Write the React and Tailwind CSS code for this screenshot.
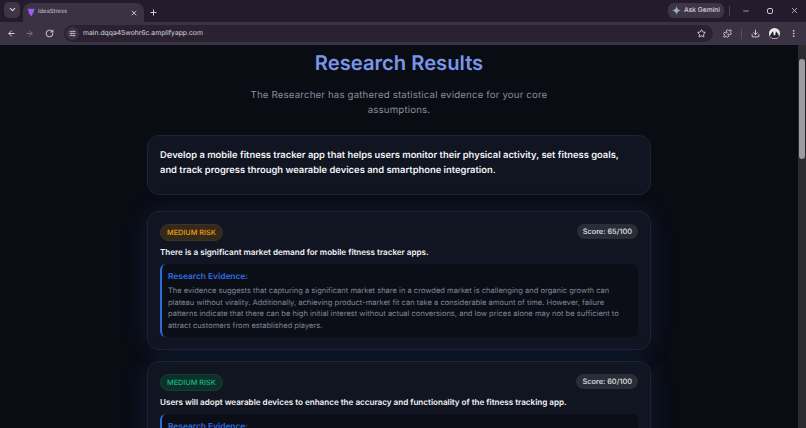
import { ArrowLeft, ArrowRight, ChevronDown, Download, Minus, MoreVertical, Plus, Puzzle, RotateCw, SlidersHorizontal, Star, X } from 'lucide-react';

const results = [
  {
    tone: 'amber',
    score: '65/100',
    claim: 'There is a significant market demand for mobile fitness tracker apps.',
    evidence:
      'The evidence suggests that capturing a significant market share in a crowded market is challenging and organic growth can plateau without virality. Additionally, achieving product-market fit can take a considerable amount of time. However, failure patterns indicate that there can be high initial interest without actual conversions, and low prices alone may not be sufficient to attract customers from established players.',
  },
  {
    tone: 'green',
    score: '60/100',
    claim: 'Users will adopt wearable devices to enhance the accuracy and functionality of the fitness tracking app.',
  },
];

function Gemini() {
  return (
    <svg viewBox="0 0 24 24" className="h-[9px] w-[9px] shrink-0">
      <path d="M12 0C13 7 17 11 24 12C17 13 13 17 12 24C11 17 7 13 0 12C7 11 11 7 12 0Z" fill="#6ea8e8" />
      <path d="M12 6C12.5 9 15 11.5 18 12C15 12.5 12.5 15 12 18C11.5 15 9 12.5 6 12C9 11.5 11.5 9 12 6Z" fill="#e8a06e" />
    </svg>
  );
}

function Avatar() {
  return (
    <svg viewBox="0 0 12 12" className="ml-[9px] h-[11px] w-[11px] shrink-0">
      <circle cx="6" cy="6" r="6" fill="#ecebe8" />
      <path d="M1 9C2 6 3 5 4.5 3.5L5.2 8H6.8L7.5 3.5C9 5 10 6 11 9C9 12 3 12 1 9Z" fill="#24222a" />
    </svg>
  );
}

function Chrome() {
  return (
    <div className="shrink-0 text-[#d9d5de]">
      <div className="flex h-[22px] items-end bg-[#241c2c] pl-[4px]">
        <div className="mb-[3px] flex h-[16px] w-[16px] items-center justify-center self-center rounded-[5px] bg-[#3e3647]">
          <ChevronDown size={9} strokeWidth={3} />
        </div>
        <div className="ml-[3px] flex h-[19px] w-[121px] items-center rounded-t-[8px] bg-[#3b3344] pr-[6px] pl-[4px]">
          <svg viewBox="0 0 12 12" className="h-[9px] w-[9px] shrink-0">
            <path d="M1 1H10L9 5L6 11L3 8Z" fill="#9b5cf0" />
          </svg>
          <span className="ml-[2px] flex-1 text-[5.8px] text-[#c9c4cf]">IdeaStress</span>
          <X size={8} strokeWidth={2.5} />
        </div>
        <Plus size={9} strokeWidth={2.5} className="mb-[5px] ml-[5px]" />
        <div className="mb-[1px] ml-auto flex items-center self-center">
          <div className="flex h-[15px] w-[56px] items-center justify-center gap-[3px] rounded-[6px] bg-[#3e3647] text-[6.7px] font-medium">
            <Gemini />
            Ask Gemini
          </div>
          <div className="mr-[4px] ml-[5px] h-[10px] w-px bg-[#4d4556]" />
          <div className="flex w-[24px] justify-center">
            <Minus size={8} />
          </div>
          <div className="flex w-[24px] justify-center">
            <div className="h-[6px] w-[6px] rounded-[2px] border border-[#c9c4cf]" />
          </div>
          <div className="flex w-[24px] justify-center">
            <X size={9} />
          </div>
        </div>
      </div>
      <div className="flex h-[23px] items-center bg-[#3b3344] pl-[7px]">
        <ArrowLeft size={9} strokeWidth={2.5} />
        <ArrowRight size={9} strokeWidth={2.5} className="ml-[9px] text-[#7d7585]" />
        <RotateCw size={9} strokeWidth={2.5} className="ml-[11px]" />
        <div className="ml-[10px] flex h-[17px] w-[649px] items-center rounded-full bg-[#2a2231] pr-[7px] pl-[2px]">
          <div className="flex h-[13px] w-[13px] items-center justify-center rounded-full bg-[#3b3344]">
            <SlidersHorizontal size={7} strokeWidth={2.5} />
          </div>
          <span className="ml-[4px] flex-1 text-[6.8px] text-[#d9d5de]">main.dqqa45wohr6c.amplifyapp.com</span>
          <Star size={9} strokeWidth={2.5} />
        </div>
        <Puzzle size={9} strokeWidth={2.5} className="ml-[10px]" />
        <div className="ml-[9px] h-[10px] w-px bg-[#5b5364]" />
        <Download size={9} strokeWidth={2.5} className="ml-[9px]" />
        <Avatar />
        <MoreVertical size={9} strokeWidth={2.5} className="ml-[9px]" />
      </div>
    </div>
  );
}

function ResultCard({ item }) {
  const isAmber = item.tone === 'amber';
  return (
    <section className="rounded-[12px] border border-[#1b2334] bg-[#111521] px-[12px] pt-[12px] pb-[12px] shadow-[0_0_24px_rgba(40,90,170,0.18)]">
      <div className="flex items-start justify-between">
        <span
          className={
            isAmber
              ? 'rounded-full border border-[#3f3220] bg-[#33291d] px-[6px] py-[1px] text-[7.3px] leading-[13px] font-medium text-[#f59e0b]'
              : 'rounded-full border border-[#114034] bg-[#0f3029] px-[6px] py-[1px] text-[7.3px] leading-[13px] font-medium text-[#10b981]'
          }
        >
          MEDIUM RISK
        </span>
        <span className="rounded-full bg-[#292d37] px-[6px] py-[2px] text-[7.4px] leading-[11px] font-medium text-[#e2e4e8]">
          Score: {item.score}
        </span>
      </div>
      <p className="mt-[5px] text-[8.1px] leading-[12px] font-semibold text-[#f1f3f6]">{item.claim}</p>
      <div className="mt-[6px] rounded-[6px] border-l-2 border-[#2b6cd8] bg-[#0b0e16] px-[6px] pt-[7px] pb-[6px]">
        <h3 className="text-[8.4px] leading-[12px] font-semibold text-[#2f6fe0]">Research Evidence:</h3>
        {item.evidence && (
          <p className="mt-[2px] text-[7.55px] leading-[11.5px] text-[#7f8796]">{item.evidence}</p>
        )}
      </div>
    </section>
  );
}

export default function App() {
  return (
    <div className="flex h-[428px] w-[806px] flex-col overflow-hidden bg-[#0a0c14] font-['Inter',sans-serif] [text-rendering:geometricPrecision]">
      <Chrome />
      <div className="flex min-h-0 flex-1">
        <main className="min-w-0 flex-1 overflow-hidden">
          <div className="mx-auto w-[504px] pt-[3px]">
            <h1 className="text-center text-[20.2px] leading-[30px] font-semibold text-[#7a96e8]">Research Results</h1>
            <p className="mx-auto mt-[10px] w-[320px] text-center text-[9.7px] leading-[15px] tracking-[0.15px] text-[#858d9c]">
              The Researcher has gathered statistical evidence for your core assumptions.
            </p>
            <div className="mt-[17px] rounded-[12px] border border-[#1b2334] bg-[#111521] pt-[12px] pr-[24px] pb-[16px] pl-[12px]">
              <p className="text-[9.4px] leading-[15px] font-semibold text-[#f1f3f6]">
                Develop a mobile fitness tracker app that helps users monitor their physical activity, set fitness goals, and track progress through wearable devices and smartphone integration.
              </p>
            </div>
            <div className="mt-[16px] flex flex-col gap-[11px]">
              {results.map((item) => (
                <ResultCard key={item.score} item={item} />
              ))}
            </div>
          </div>
        </main>
        <div className="flex w-[8px] justify-center bg-[#2c2c2f]">
          <div className="mt-[14px] h-[100px] w-[6px] rounded-full bg-[#9c9c9f]" />
        </div>
      </div>
    </div>
  );
}
